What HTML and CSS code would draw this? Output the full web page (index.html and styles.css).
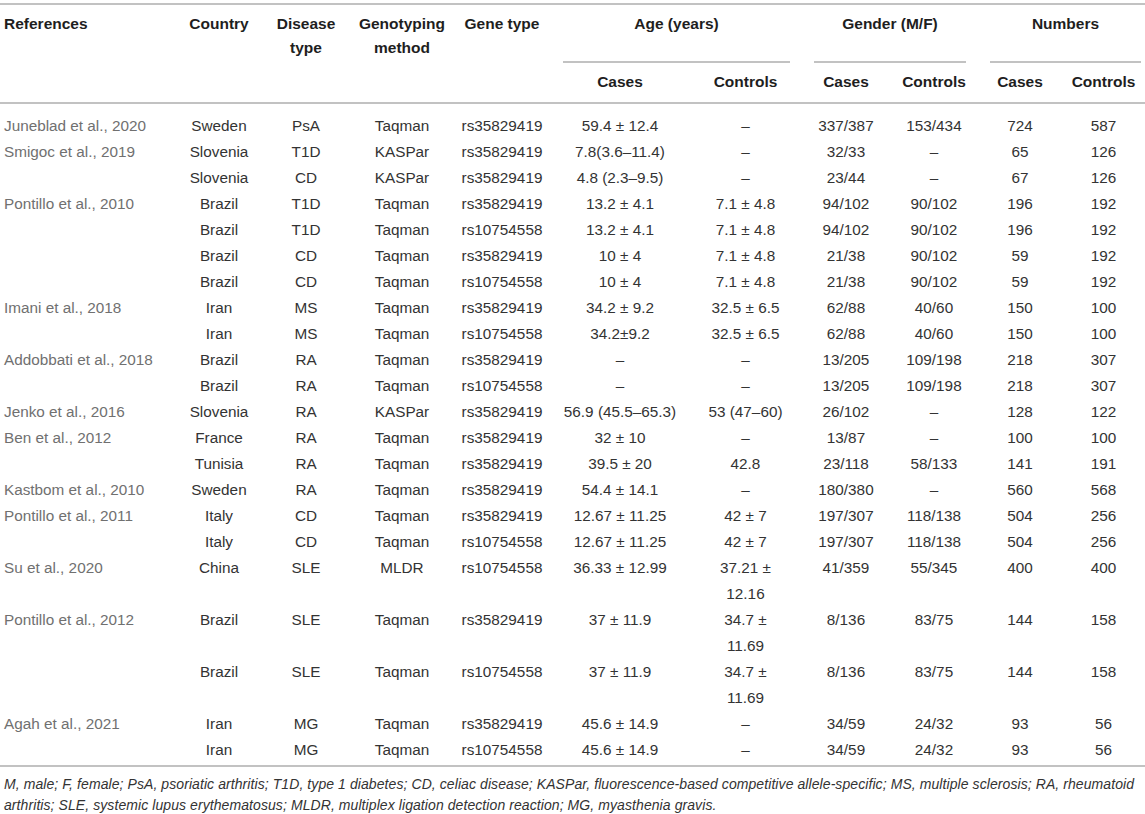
FILE: index.html
```html
<!DOCTYPE html>
<html lang="en">
<head>
<meta charset="utf-8">
<title>Table</title>
<link rel="stylesheet" href="styles.css">
</head>
<body>
<div class="page">
<table class="tbl">
  <colgroup>
    <col class="w-ref"><col class="w-country"><col class="w-disease"><col class="w-geno"><col class="w-gene">
    <col class="w-agec"><col class="w-agek"><col class="w-genc"><col class="w-genk"><col class="w-numc"><col class="w-numk">
  </colgroup>
  <thead>
    <tr class="h1">
      <th rowspan="2" class="left">References</th>
      <th rowspan="2">Country</th>
      <th rowspan="2">Disease type</th>
      <th rowspan="2">Genotyping method</th>
      <th rowspan="2">Gene type</th>
      <th colspan="2" class="group"><div class="grp">Age (years)</div></th>
      <th colspan="2" class="group"><div class="grp">Gender (M/F)</div></th>
      <th colspan="2" class="group"><div class="grp grp-last">Numbers</div></th>
    </tr>
    <tr class="h2">
      <th>Cases</th><th>Controls</th>
      <th>Cases</th><th>Controls</th>
      <th>Cases</th><th>Controls</th>
    </tr>
  </thead>
  <tbody>
    <tr><td class="ref">Juneblad et al., 2020</td><td>Sweden</td><td>PsA</td><td>Taqman</td><td>rs35829419</td><td>59.4 ± 12.4</td><td>–</td><td>337/387</td><td>153/434</td><td>724</td><td>587</td></tr>
    <tr><td class="ref">Smigoc et al., 2019</td><td>Slovenia</td><td>T1D</td><td>KASPar</td><td>rs35829419</td><td>7.8(3.6–11.4)</td><td>–</td><td>32/33</td><td>–</td><td>65</td><td>126</td></tr>
    <tr><td class="ref"></td><td>Slovenia</td><td>CD</td><td>KASPar</td><td>rs35829419</td><td>4.8 (2.3–9.5)</td><td>–</td><td>23/44</td><td>–</td><td>67</td><td>126</td></tr>
    <tr><td class="ref">Pontillo et al., 2010</td><td>Brazil</td><td>T1D</td><td>Taqman</td><td>rs35829419</td><td>13.2 ± 4.1</td><td>7.1 ± 4.8</td><td>94/102</td><td>90/102</td><td>196</td><td>192</td></tr>
    <tr><td class="ref"></td><td>Brazil</td><td>T1D</td><td>Taqman</td><td>rs10754558</td><td>13.2 ± 4.1</td><td>7.1 ± 4.8</td><td>94/102</td><td>90/102</td><td>196</td><td>192</td></tr>
    <tr><td class="ref"></td><td>Brazil</td><td>CD</td><td>Taqman</td><td>rs35829419</td><td>10 ± 4</td><td>7.1 ± 4.8</td><td>21/38</td><td>90/102</td><td>59</td><td>192</td></tr>
    <tr><td class="ref"></td><td>Brazil</td><td>CD</td><td>Taqman</td><td>rs10754558</td><td>10 ± 4</td><td>7.1 ± 4.8</td><td>21/38</td><td>90/102</td><td>59</td><td>192</td></tr>
    <tr><td class="ref">Imani et al., 2018</td><td>Iran</td><td>MS</td><td>Taqman</td><td>rs35829419</td><td>34.2 ± 9.2</td><td>32.5 ± 6.5</td><td>62/88</td><td>40/60</td><td>150</td><td>100</td></tr>
    <tr><td class="ref"></td><td>Iran</td><td>MS</td><td>Taqman</td><td>rs10754558</td><td>34.2±9.2</td><td>32.5 ± 6.5</td><td>62/88</td><td>40/60</td><td>150</td><td>100</td></tr>
    <tr><td class="ref">Addobbati et al., 2018</td><td>Brazil</td><td>RA</td><td>Taqman</td><td>rs35829419</td><td>–</td><td>–</td><td>13/205</td><td>109/198</td><td>218</td><td>307</td></tr>
    <tr><td class="ref"></td><td>Brazil</td><td>RA</td><td>Taqman</td><td>rs10754558</td><td>–</td><td>–</td><td>13/205</td><td>109/198</td><td>218</td><td>307</td></tr>
    <tr><td class="ref">Jenko et al., 2016</td><td>Slovenia</td><td>RA</td><td>KASPar</td><td>rs35829419</td><td>56.9 (45.5–65.3)</td><td>53 (47–60)</td><td>26/102</td><td>–</td><td>128</td><td>122</td></tr>
    <tr><td class="ref">Ben et al., 2012</td><td>France</td><td>RA</td><td>Taqman</td><td>rs35829419</td><td>32 ± 10</td><td>–</td><td>13/87</td><td>–</td><td>100</td><td>100</td></tr>
    <tr><td class="ref"></td><td>Tunisia</td><td>RA</td><td>Taqman</td><td>rs35829419</td><td>39.5 ± 20</td><td>42.8</td><td>23/118</td><td>58/133</td><td>141</td><td>191</td></tr>
    <tr><td class="ref">Kastbom et al., 2010</td><td>Sweden</td><td>RA</td><td>Taqman</td><td>rs35829419</td><td>54.4 ± 14.1</td><td>–</td><td>180/380</td><td>–</td><td>560</td><td>568</td></tr>
    <tr><td class="ref">Pontillo et al., 2011</td><td>Italy</td><td>CD</td><td>Taqman</td><td>rs35829419</td><td>12.67 ± 11.25</td><td>42 ± 7</td><td>197/307</td><td>118/138</td><td>504</td><td>256</td></tr>
    <tr><td class="ref"></td><td>Italy</td><td>CD</td><td>Taqman</td><td>rs10754558</td><td>12.67 ± 11.25</td><td>42 ± 7</td><td>197/307</td><td>118/138</td><td>504</td><td>256</td></tr>
    <tr><td class="ref">Su et al., 2020</td><td>China</td><td>SLE</td><td>MLDR</td><td>rs10754558</td><td>36.33 ± 12.99</td><td>37.21 ±<br>12.16</td><td>41/359</td><td>55/345</td><td>400</td><td>400</td></tr>
    <tr><td class="ref">Pontillo et al., 2012</td><td>Brazil</td><td>SLE</td><td>Taqman</td><td>rs35829419</td><td>37 ± 11.9</td><td>34.7 ±<br>11.69</td><td>8/136</td><td>83/75</td><td>144</td><td>158</td></tr>
    <tr><td class="ref"></td><td>Brazil</td><td>SLE</td><td>Taqman</td><td>rs10754558</td><td>37 ± 11.9</td><td>34.7 ±<br>11.69</td><td>8/136</td><td>83/75</td><td>144</td><td>158</td></tr>
    <tr><td class="ref">Agah et al., 2021</td><td>Iran</td><td>MG</td><td>Taqman</td><td>rs35829419</td><td>45.6 ± 14.9</td><td>–</td><td>34/59</td><td>24/32</td><td>93</td><td>56</td></tr>
    <tr><td class="ref"></td><td>Iran</td><td>MG</td><td>Taqman</td><td>rs10754558</td><td>45.6 ± 14.9</td><td>–</td><td>34/59</td><td>24/32</td><td>93</td><td>56</td></tr>
  </tbody>
</table>
<p class="note">M, male; F, female; PsA, psoriatic arthritis; T1D, type 1 diabetes; CD, celiac disease; KASPar, fluorescence-based competitive allele-specific; MS, multiple sclerosis; RA, rheumatoid arthritis; SLE, systemic lupus erythematosus; MLDR, multiplex ligation detection reaction; MG, myasthenia gravis.</p>
</div>
</body>
</html>
```

FILE: styles.css
```css
html, body {
  margin: 0;
  padding: 0;
  background: #ffffff;
}

body {
  font-family: "Liberation Sans", Arial, Helvetica, sans-serif;
  font-size: 15.3px;
  color: #333333;
}

.page {
  width: 1145px;
  padding-top: 3px;
}

.tbl {
  width: 1145px;
  table-layout: fixed;
  border-collapse: collapse;
  border-top: 2px solid #c2c2c2;
  border-bottom: 2px solid #c2c2c2;
}

.w-ref { width: 177px; }
.w-country { width: 84px; }
.w-disease { width: 90px; }
.w-geno { width: 102px; }
.w-gene { width: 98px; }
.w-agec { width: 138px; }
.w-agek { width: 113px; }
.w-genc { width: 88px; }
.w-genk { width: 88px; }
.w-numc { width: 84px; }
.w-numk { width: 83px; }

th {
  font-weight: bold;
  font-size: 15.5px;
  color: #1e1e1e;
  text-align: center;
  vertical-align: top;
  line-height: 24px;
  padding: 7px 4px 8px;
}

th.left {
  text-align: left;
}

thead th[rowspan] {
  border-bottom: 2px solid #c2c2c2;
}

.h1 th.group {
  padding: 7px 0 0;
}

.grp {
  margin: 0 12px;
  padding-bottom: 25px;
  border-bottom: 2px solid #c2c2c2;
}

.grp-last {
  margin-right: 4px;
}

.h2 th {
  border-bottom: 2px solid #c2c2c2;
}

td {
  text-align: center;
  vertical-align: top;
  line-height: 26px;
  padding: 0 4px;
  color: #333333;
}

td.ref {
  text-align: left;
  color: #707070;
}

tbody tr:first-child td {
  padding-top: 9px;
}

tbody tr:last-child td {
  padding-bottom: 2px;
}

.note {
  margin: 7px 0 0;
  padding: 0 0 0 4px;
  font-style: italic;
  font-size: 14px;
  letter-spacing: 0.08px;
  line-height: 21px;
  color: #333333;
}
```
